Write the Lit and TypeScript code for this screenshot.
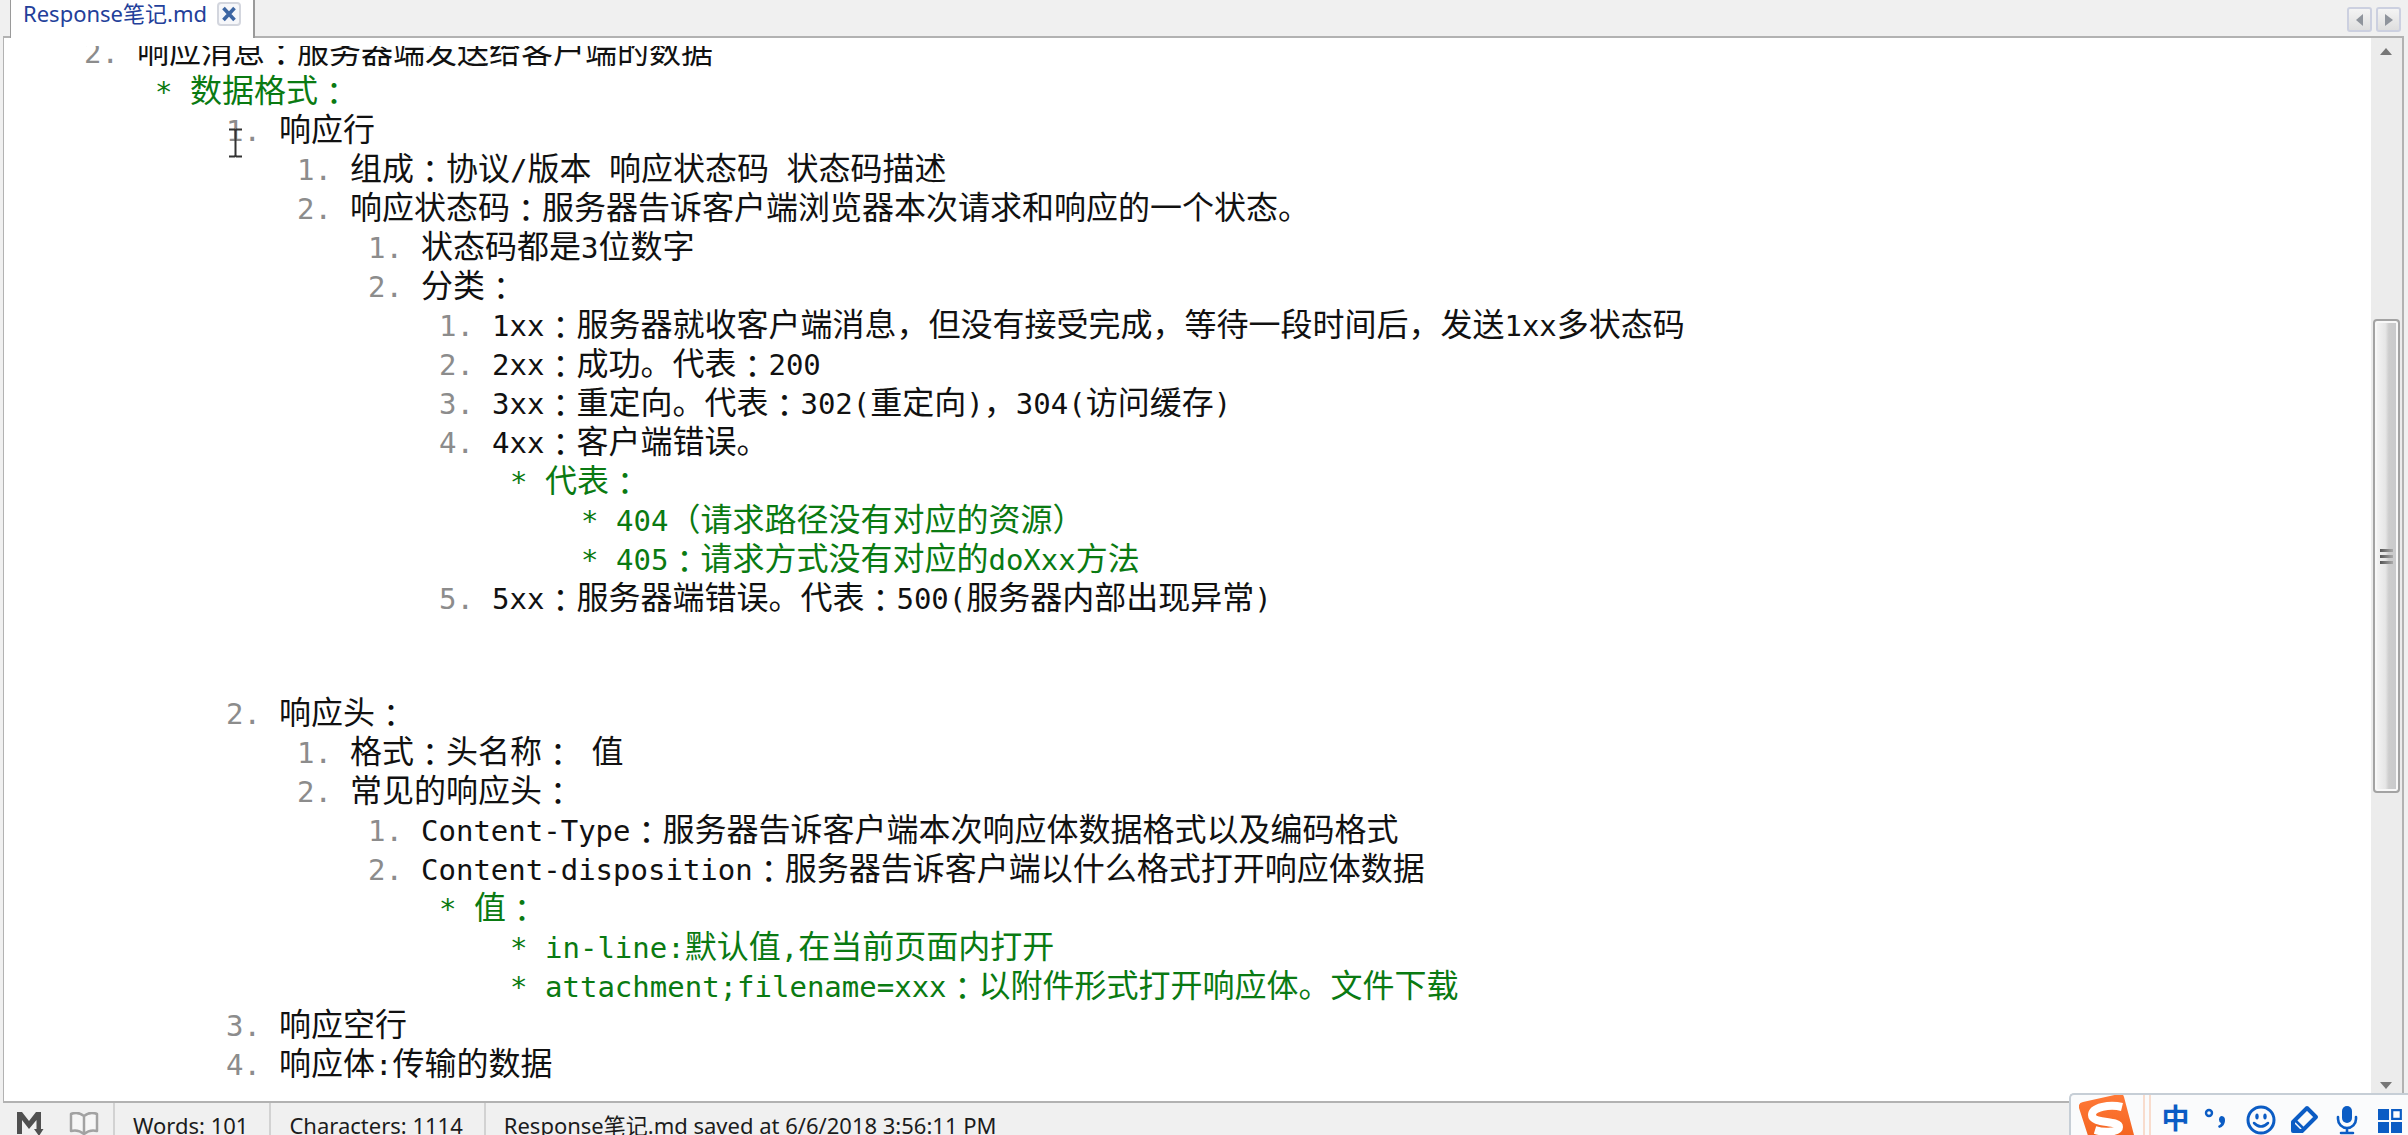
import { LitElement, html, css, svg, nothing, type TemplateResult } from "lit";
import { customElement } from "lit/decorators.js";

interface Entry {
  mark: string;
  text: string;
  gap?: boolean;
  items?: Entry[];
}

const NOTES: Entry[] = [
  {
    mark: "2.",
    text: "响应消息：服务器端发送给客户端的数据",
    items: [
      {
        mark: "*",
        text: "数据格式：",
        items: [
          {
            mark: "1.",
            text: "响应行",
            gap: true,
            items: [
              { mark: "1.", text: "组成：协议/版本 响应状态码 状态码描述" },
              {
                mark: "2.",
                text: "响应状态码：服务器告诉客户端浏览器本次请求和响应的一个状态。",
                items: [
                  { mark: "1.", text: "状态码都是3位数字" },
                  {
                    mark: "2.",
                    text: "分类：",
                    items: [
                      { mark: "1.", text: "1xx：服务器就收客户端消息，但没有接受完成，等待一段时间后，发送1xx多状态码" },
                      { mark: "2.", text: "2xx：成功。代表：200" },
                      { mark: "3.", text: "3xx：重定向。代表：302(重定向)，304(访问缓存)" },
                      {
                        mark: "4.",
                        text: "4xx：客户端错误。",
                        items: [
                          {
                            mark: "*",
                            text: "代表：",
                            items: [
                              { mark: "*", text: "404（请求路径没有对应的资源）" },
                              { mark: "*", text: "405：请求方式没有对应的doXxx方法" },
                            ],
                          },
                        ],
                      },
                      { mark: "5.", text: "5xx：服务器端错误。代表：500(服务器内部出现异常)" },
                    ],
                  },
                ],
              },
            ],
          },
          {
            mark: "2.",
            text: "响应头：",
            items: [
              { mark: "1.", text: "格式：头名称： 值" },
              {
                mark: "2.",
                text: "常见的响应头：",
                items: [
                  { mark: "1.", text: "Content-Type：服务器告诉客户端本次响应体数据格式以及编码格式" },
                  {
                    mark: "2.",
                    text: "Content-disposition：服务器告诉客户端以什么格式打开响应体数据",
                    items: [
                      {
                        mark: "*",
                        text: "值：",
                        items: [
                          { mark: "*", text: "in-line:默认值,在当前页面内打开" },
                          { mark: "*", text: "attachment;filename=xxx：以附件形式打开响应体。文件下载" },
                        ],
                      },
                    ],
                  },
                ],
              },
            ],
          },
          { mark: "3.", text: "响应空行" },
          { mark: "4.", text: "响应体:传输的数据" },
        ],
      },
    ],
  },
];

/* Splits a line into Latin runs, full-width colons and Chinese runs. */
const runs = (text: string) =>
  (text.match(/[\x20-\x7e]+|：|[^\x20-\x7e：]+/g) ?? []).map((run) =>
    run === "："
      ? html`<span class="colon" lang="zh-TW">：</span>`
      : /^[\x20-\x7e]/.test(run)
        ? html`<span class="latin">${run}</span>`
        : run
  );

@customElement("notes-list")
export class NotesList extends LitElement {
  static styles = css`
    :host {
      display: block;
      color: #111;
    }
    ul {
      list-style: none;
      margin: 0;
      padding: 0;
    }
    ul ul {
      padding-left: 71px;
    }
    .gap {
      padding-bottom: 76px;
    }
    .line {
      display: flex;
      align-items: baseline;
      height: 39px;
      line-height: 39px;
      font-family: "Noto Sans CJK SC", sans-serif;
      font-size: 32px;
      white-space: pre;
    }
    .mark,
    .latin {
      font-family: "DejaVu Sans Mono", monospace;
      font-size: 29px;
    }
    .mark {
      width: 53px;
      flex: none;
      color: #8c8c8c;
    }
    .star {
      color: #0a7a12;
    }
    .star .mark {
      width: 35px;
      color: inherit;
    }
    .colon {
      font-family: "Noto Sans CJK TC", sans-serif;
      line-height: 24px;
      vertical-align: -3px;
    }
  `;

  private renderItems(items: Entry[]): TemplateResult {
    return html`<ul>
      ${items.map(
        (e) => html`<li class=${e.gap ? "gap" : ""}>
          <div class="line ${e.mark === "*" ? "star" : ""}"><span class="mark">${e.mark}</span><span>${runs(e.text)}</span></div>
          ${e.items ? this.renderItems(e.items) : nothing}
        </li>`
      )}
    </ul>`;
  }

  render() {
    return this.renderItems(NOTES);
  }
}

const BLUE = "#0b5cc4";

const ICONS = {
  punctuation: svg`<circle cx="6" cy="8" r="3" fill="none" stroke=${BLUE} stroke-width="2.4"/>
    <path d="M18 11a4 4 0 0 1 4 4c0 4-2 7-6 8l-1-2c2-1 3-2 3-3a4 4 0 0 1 0-7z" fill=${BLUE}/>`,
  smile: svg`<circle cx="15" cy="15" r="13" fill="none" stroke=${BLUE} stroke-width="3"/>
    <ellipse cx="11" cy="11.500" rx="1.700" ry="3" fill=${BLUE}/><ellipse cx="19" cy="11.500" rx="1.700" ry="3" fill=${BLUE}/>
    <path d="M8 18q7 7 14 0" fill="none" stroke=${BLUE} stroke-width="2.500" stroke-linecap="round"/>`,
  pen: svg`<path d="M18 3l9 9-14 14H4v-9z" fill="none" stroke=${BLUE} stroke-width="4" stroke-linejoin="round"/>
    <path d="M4 17l9 9H4z" fill=${BLUE}/><path d="M6 15l8 8" stroke=${BLUE} stroke-width="2.500"/>`,
  mic: svg`<rect x="10" y="1" width="10" height="17" rx="5" fill=${BLUE}/>
    <path d="M6 12v2a9 9 0 0 0 18 0v-2M15 23v5M9 28h12" fill="none" stroke=${BLUE} stroke-width="2.600" stroke-linecap="round"/>`,
  grid: svg`<path d="M3 4h11v11H3zM3 17h11v11H3zM16 17h11v11H16z" fill=${BLUE}/>
    <path d="M17.200 5.200h8.600v8.600h-8.600z" fill="#fff" stroke=${BLUE} stroke-width="2.200"/>`,
};

@customElement("ime-bar")
export class ImeBar extends LitElement {
  static styles = css`
    :host {
      display: flex;
      align-items: flex-start;
      box-sizing: border-box;
      height: 42px;
      padding-right: 2px;
      background: #fafbfc;
      border: 2px solid #c6ced6;
      border-width: 2px 0 0 2px;
      border-top-left-radius: 5px;
    }
    button {
      border: 0;
      padding: 0;
      background: none;
      height: 40px;
      display: block;
    }
    svg {
      display: block;
    }
    .logo {
      width: 64px;
      margin-left: 8px;
      overflow: hidden;
    }
    .rule {
      width: 4px;
      height: 40px;
      border: 2px solid #f8dccd;
      border-width: 0 2px;
    }
    .tools {
      display: flex;
      gap: 12px;
      padding-left: 9px;
    }
    .tools button {
      width: 31px;
      padding-top: 10px;
    }
    .tools .lang {
      font: 700 28px/28px "Noto Sans CJK SC", sans-serif;
      color: #0b5cc4;
      padding: 4px 0 0;
    }
  `;

  private tool(label: string, icon: unknown) {
    return html`<button aria-label=${label}><svg width="30" height="30" viewBox="0 0 30 30">${icon}</svg></button>`;
  }

  render() {
    return html`
      <button class="logo" aria-label="输入法">
        <svg width="64" height="40" viewBox="0 0 64 40">
          <defs>
            <linearGradient id="o" x1="0" y1="0" x2="0" y2="1">
              <stop offset="0" stop-color="#ff7a38" /><stop offset="1" stop-color="#f2601c" />
            </linearGradient>
          </defs>
          <path d="M4 7L40-1q4-1 5 3l10 38-5 10H12L0 13q-1-5 4-6z" fill="url(#o)" />
          <path d="M43 12C31 9 13 12 13 20c0 9 27 5 27 12 0 5-14 6-24 3" fill="none" stroke="#fff" stroke-width="8" />
        </svg>
      </button>
      <div class="rule"></div>
      <div class="tools">
        <button class="lang">中</button>
        ${this.tool("标点", ICONS.punctuation)} ${this.tool("表情", ICONS.smile)} ${this.tool("手写", ICONS.pen)}
        ${this.tool("语音", ICONS.mic)} ${this.tool("工具箱", ICONS.grid)}
      </div>
    `;
  }
}

@customElement("app-root")
export class AppRoot extends LitElement {
  static styles = css`
    :host {
      position: relative;
      display: flex;
      flex-direction: column;
      height: 100vh;
      overflow: hidden;
      background: #f0f0f0;
      font-family: "Noto Sans", "Noto Sans CJK SC", sans-serif;
      font-size: 22px;
      color: #1c1c1c;
    }
    button {
      padding: 0;
    }
    svg {
      display: block;
    }
    .tabs {
      display: flex;
      justify-content: space-between;
      height: 36px;
      padding: 0 7px 0 10px;
      flex: none;
    }
    .tab {
      position: relative;
      z-index: 1;
      display: flex;
      align-items: flex-start;
      gap: 10px;
      height: 38px;
      padding: 0 12px;
      background: #fff;
      border: 2px solid #9a9a9a;
      border-width: 0 2px 0 1px;
    }
    .tab a {
      color: #23409a;
      text-decoration: none;
      line-height: 26px;
    }
    .close {
      width: 24px;
      height: 24px;
      margin-top: 2px;
      border: 2px solid #d3d6de;
      border-radius: 4px;
      background: #f6f7fa;
    }
    .nav {
      display: flex;
      gap: 4px;
      padding-top: 7px;
    }
    .nav button {
      width: 25px;
      height: 25px;
      border: 2px solid #ccd0e0;
      border-radius: 3px;
      background: linear-gradient(#f4f4f4, #dedede);
    }
    .pane {
      display: flex;
      flex: 1;
      min-height: 0;
      margin: 0 4px 0 3px;
      border: 2px solid #b2b2b2;
      border-left-width: 1px;
      background: #fff;
    }
    .view {
      position: relative;
      flex: 1;
      min-width: 0;
      margin-top: 8px;
      overflow: hidden;
    }
    .content {
      margin: -16px 0 0 80px;
    }
    .caret {
      position: absolute;
      left: 225px;
      top: 82px;
    }
    .scroll {
      display: flex;
      flex-direction: column;
      align-items: center;
      width: 31px;
      background: #ececec;
    }
    .scroll button {
      width: 31px;
      height: 28px;
      border: 0;
      background: none;
    }
    .before {
      flex: 254;
    }
    .thumb {
      flex: 472;
      box-sizing: border-box;
      display: flex;
      flex-direction: column;
      justify-content: center;
      align-items: center;
      gap: 3px;
      width: 27px;
      border: 2px solid #a3a3a3;
      border-radius: 4px;
      box-shadow: inset 0 0 0 2px #f8f8f8;
      background: linear-gradient(90deg, #f6f6f6, #e6e6e6 45%, #cdcdcd 60%, #c8c9cb);
    }
    .thumb i {
      width: 13px;
      height: 3px;
      background: linear-gradient(90deg, #555, #aaa);
    }
    .after {
      flex: 281;
    }
    .status {
      display: flex;
      flex: none;
      height: 32px;
      line-height: 44px;
      overflow: hidden;
      white-space: nowrap;
    }
    .status > * {
      padding: 0 21px 0 18px;
      border-left: 2px solid #d2d2d2;
    }
    .status .modes {
      display: flex;
      gap: 25px;
      box-sizing: border-box;
      width: 113px;
      padding: 9px 0 0 16px;
      border: 0;
    }
    .modes button {
      border: 0;
      background: none;
      height: 26px;
    }
    .ime {
      position: absolute;
      right: 0;
      bottom: 0;
      z-index: 2;
    }
  `;

  private arrow(d: string, fill = "#8f949c") {
    return html`<svg width="21" height="21" viewBox="0 0 21 21"><path d=${d} fill=${fill} /></svg>`;
  }

  render() {
    return html`
      <header class="tabs">
        <div class="tab">
          <a href="#">Response笔记.md</a>
          <button class="close" aria-label="Close">
            <svg width="20" height="20" viewBox="0 0 20 20">
              <path d="M4.500 4l11 12M15.500 4l-11 12" stroke="#3d66a3" stroke-width="3.600" />
            </svg>
          </button>
        </div>
        <div class="nav">
          <button aria-label="Previous tab">${this.arrow("M14 5v12l-7-6z")}</button>
          <button aria-label="Next tab">${this.arrow("M7 5v12l8-6z")}</button>
        </div>
      </header>
      <main class="pane">
        <div class="view">
          <notes-list class="content"></notes-list>
          <svg class="caret" width="13" height="30" viewBox="0 0 13 30">
            <path d="M0 1.500h5.500l1 1 1-1H13M6.500 2v26M0 28.500h5.500l1-1 1 1H13" fill="none" stroke="#333" stroke-width="2" />
          </svg>
        </div>
        <div class="scroll">
          <button aria-label="Scroll up"><svg width="31" height="28" viewBox="0 0 31 28"><path d="M9 17l6-7 6 7z" fill="#777" /></svg></button>
          <div class="before"></div>
          <div class="thumb"><i></i><i></i><i></i></div>
          <div class="after"></div>
          <button aria-label="Scroll down"><svg width="31" height="28" viewBox="0 0 31 28"><path d="M9 9l6 7 6-7z" fill="#777" /></svg></button>
        </div>
      </main>
      <footer class="status">
        <div class="modes">
          <button aria-label="Markdown mode">
            <svg width="28" height="26" viewBox="0 0 28 26">
              <path d="M1 22V0h5l7 9 7-9h5v17h2.500L23 24l-5-7h2.500V8L13 17 6 8v14z" fill="#505050" />
            </svg>
          </button>
          <button aria-label="Preview">
            <svg width="30" height="26" viewBox="0 0 30 26">
              <path d="M15 4Q9-1 2 2v17q7-2 13 3 6-5 13-3V2Q21-1 15 4zV21" fill="#f6f6f6" stroke="#a2a2a2" stroke-width="2.500" stroke-linejoin="round" />
            </svg>
          </button>
        </div>
        <span>Words: 101</span>
        <span>Characters: 1114</span>
        <span>Response笔记.md saved at 6/6/2018 3:56:11 PM</span>
      </footer>
      <ime-bar class="ime"></ime-bar>
    `;
  }
}
